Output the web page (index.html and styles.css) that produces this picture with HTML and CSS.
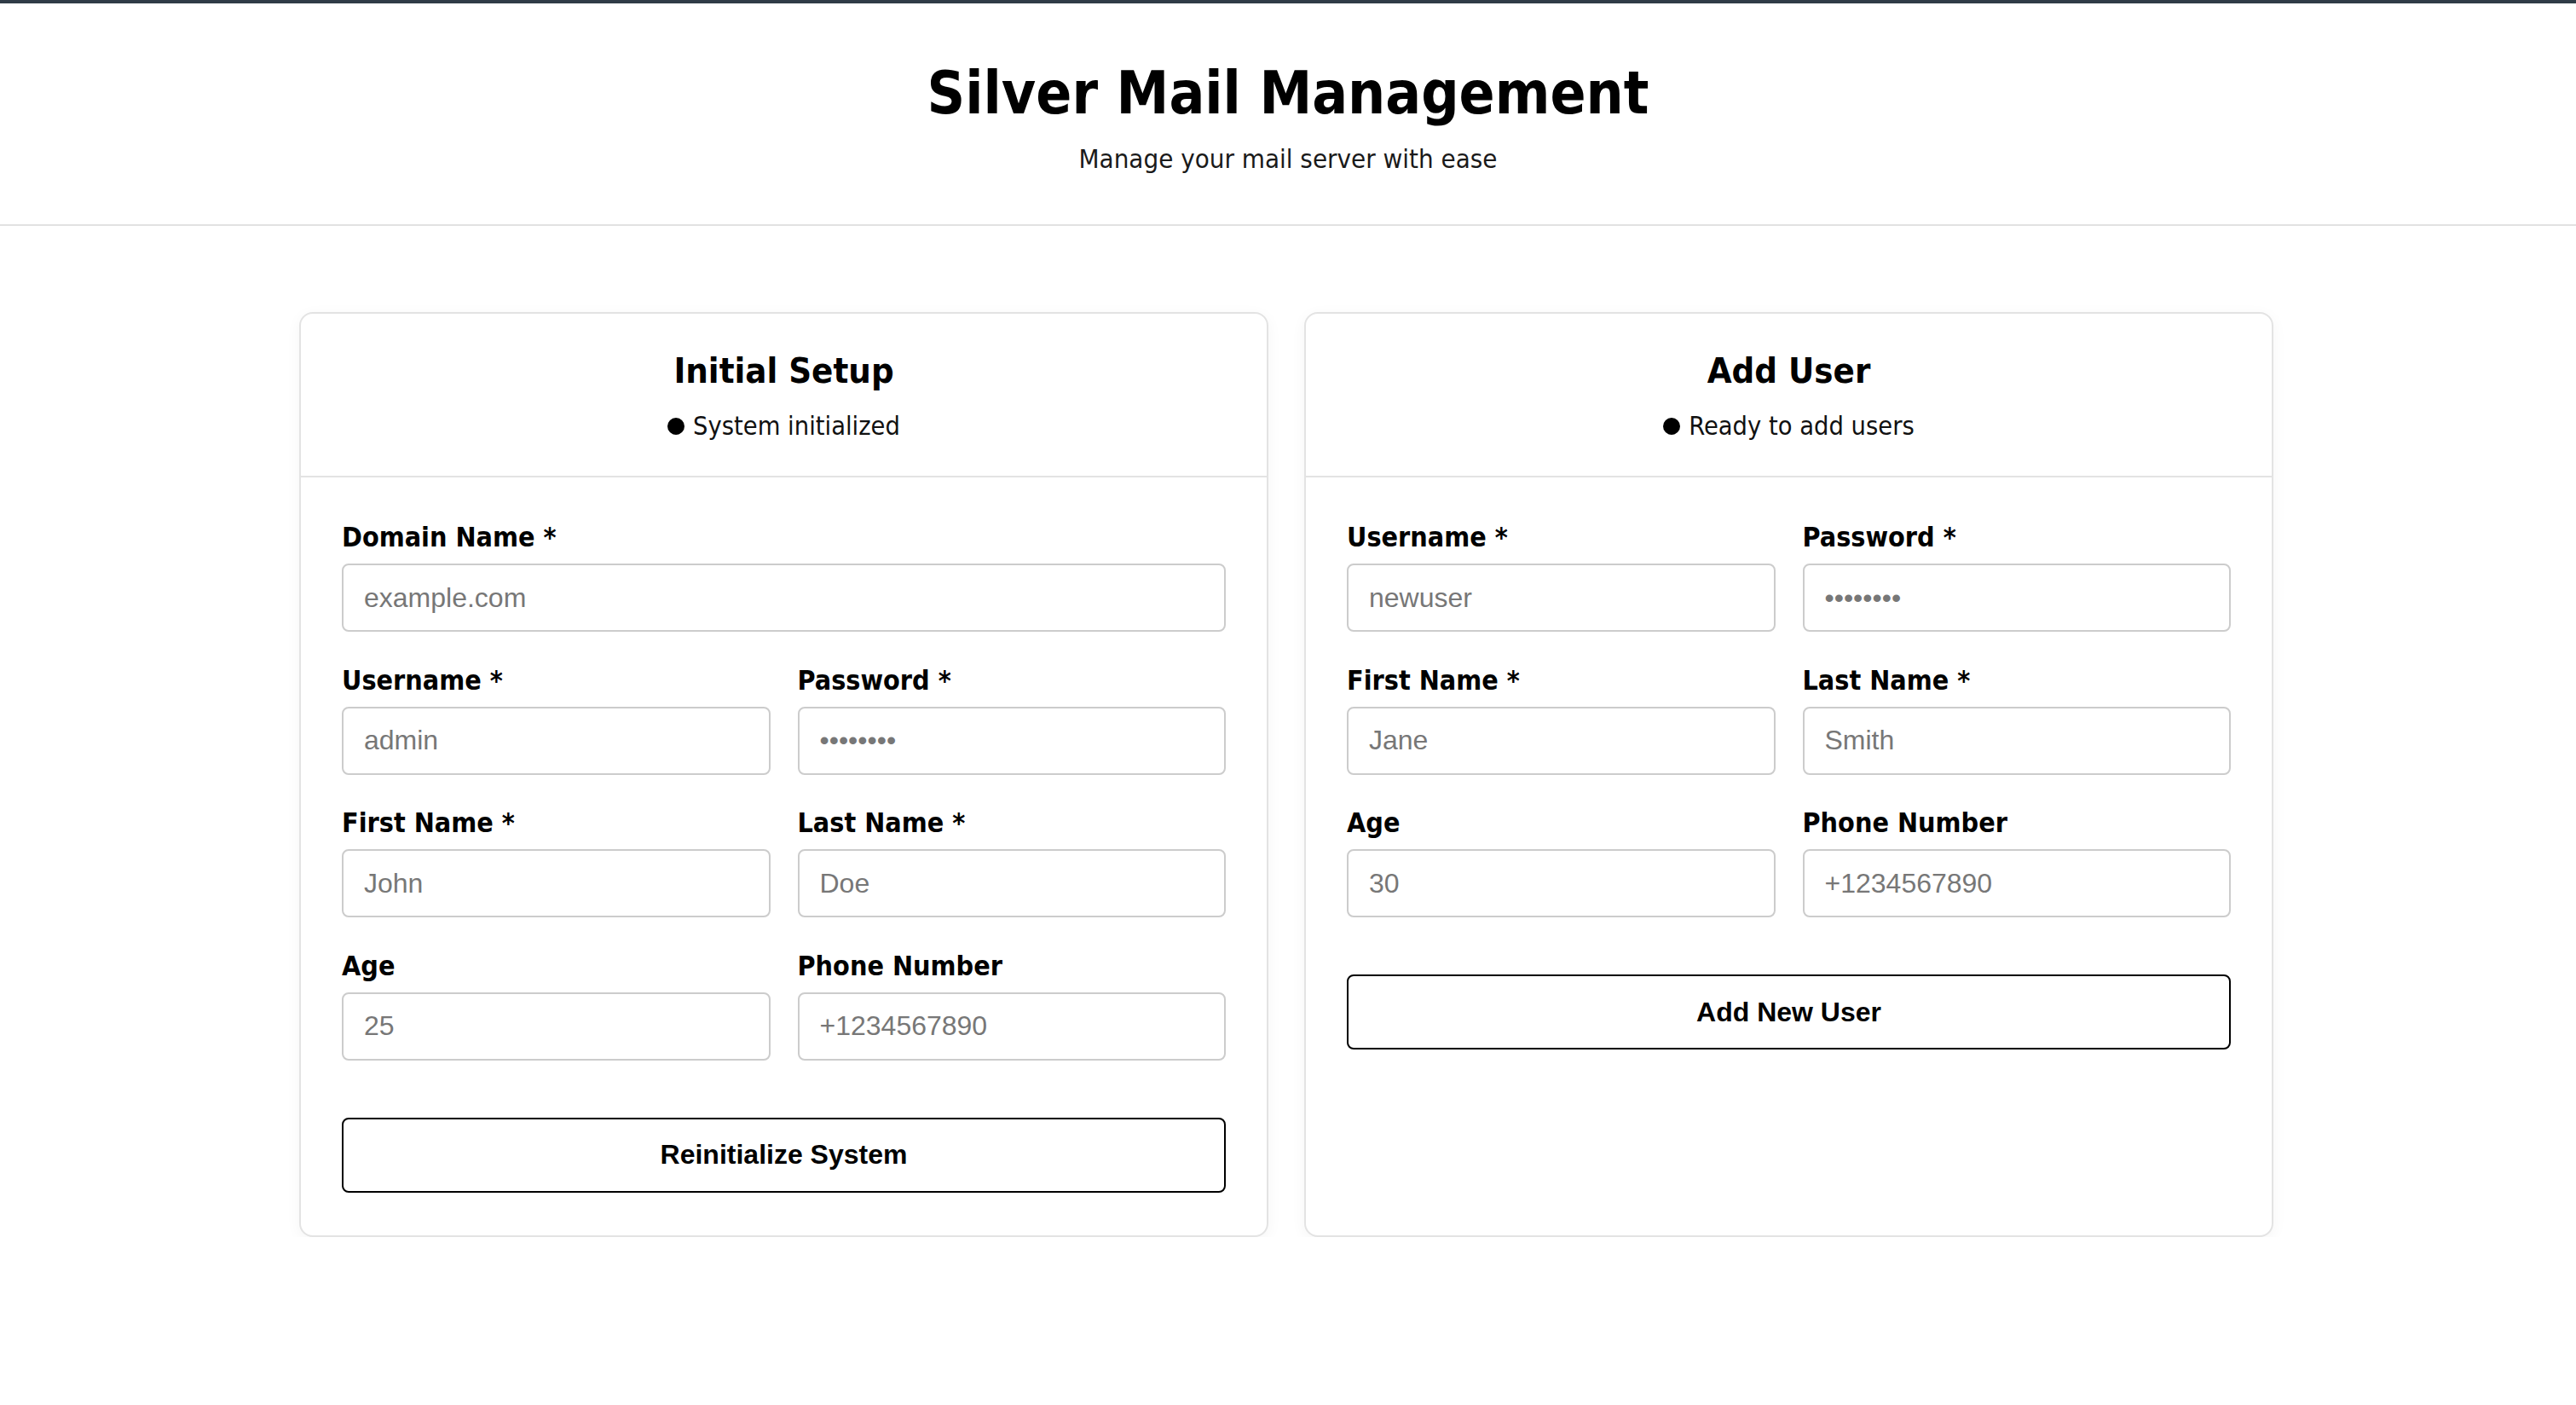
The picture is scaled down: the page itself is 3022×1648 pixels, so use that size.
FILE: index.html
```html
<!DOCTYPE html>
<html lang="en">
<head>
<meta charset="utf-8">
<title>Silver Mail Management</title>
<link rel="stylesheet" href="styles.css">
</head>
<body>
<header class="site-header">
  <h1 class="site-title">Silver Mail Management</h1>
  <p class="site-subtitle">Manage your mail server with ease</p>
</header>
<main class="panels">
  <section class="card">
    <div class="card-head">
      <h2 class="card-title">Initial Setup</h2>
      <p class="status"><span class="dot"></span>System initialized</p>
    </div>
    <form class="card-body">
      <div class="grid">
        <div class="field full">
          <label class="label">Domain Name *</label>
          <input class="input" type="text" placeholder="example.com">
        </div>
        <div class="field">
          <label class="label">Username *</label>
          <input class="input" type="text" placeholder="admin">
        </div>
        <div class="field">
          <label class="label">Password *</label>
          <input class="input" type="password" placeholder="••••••••">
        </div>
        <div class="field">
          <label class="label">First Name *</label>
          <input class="input" type="text" placeholder="John">
        </div>
        <div class="field">
          <label class="label">Last Name *</label>
          <input class="input" type="text" placeholder="Doe">
        </div>
        <div class="field">
          <label class="label">Age</label>
          <input class="input" type="text" placeholder="25">
        </div>
        <div class="field">
          <label class="label">Phone Number</label>
          <input class="input" type="text" placeholder="+1234567890">
        </div>
      </div>
      <button class="btn" type="button">Reinitialize System</button>
    </form>
  </section>
  <section class="card">
    <div class="card-head">
      <h2 class="card-title">Add User</h2>
      <p class="status"><span class="dot"></span>Ready to add users</p>
    </div>
    <form class="card-body">
      <div class="grid">
        <div class="field">
          <label class="label">Username *</label>
          <input class="input" type="text" placeholder="newuser">
        </div>
        <div class="field">
          <label class="label">Password *</label>
          <input class="input" type="password" placeholder="••••••••">
        </div>
        <div class="field">
          <label class="label">First Name *</label>
          <input class="input" type="text" placeholder="Jane">
        </div>
        <div class="field">
          <label class="label">Last Name *</label>
          <input class="input" type="text" placeholder="Smith">
        </div>
        <div class="field">
          <label class="label">Age</label>
          <input class="input" type="text" placeholder="30">
        </div>
        <div class="field">
          <label class="label">Phone Number</label>
          <input class="input" type="text" placeholder="+1234567890">
        </div>
      </div>
      <button class="btn" type="button">Add New User</button>
    </form>
  </section>
</main>
</body>
</html>
```

FILE: styles.css
```css
* { box-sizing: border-box; }

html, body { background: #ffffff; }

body {
  margin: 0;
  border-top: 4px solid #303c47;
  font-family: "DejaVu Sans Condensed", "DejaVu Sans", sans-serif;
  font-stretch: condensed;
  color: #000;
}

.site-header {
  text-align: center;
  padding: 65px 0 59px;
  border-bottom: 2px solid #e2e2e2;
}

.site-title {
  margin: 0;
  font-size: 69px;
  font-weight: bold;
  line-height: 80px;
  color: #000;
}

.site-subtitle {
  margin: 19px 0 0;
  font-size: 31px;
  line-height: 36px;
  color: #1a1a1a;
}

.panels {
  width: 2316px;
  margin: 101px 0 0 calc(50% - 1160px);
  display: grid;
  grid-template-columns: 1fr 1fr;
  column-gap: 42px;
  align-items: stretch;
}

.card {
  background: #fff;
  border: 2px solid #e3e3e3;
  border-radius: 16px;
  box-shadow: 0 4px 18px rgba(0, 0, 0, 0.045);
  display: flex;
  flex-direction: column;
}

.card-head {
  text-align: center;
  padding: 43px 48px 40px;
  border-bottom: 2px solid #e3e3e3;
}

.card-title {
  margin: 0;
  font-size: 41.5px;
  line-height: 48px;
  font-weight: bold;
}

.status {
  margin: 23px 0 0;
  font-size: 30.5px;
  line-height: 36px;
  color: #111;
  display: flex;
  justify-content: center;
  align-items: center;
}

.dot {
  display: inline-block;
  width: 20px;
  height: 20px;
  border-radius: 50%;
  background: #000;
  margin-right: 10px;
}

.card-body {
  padding: 52px 48px 50px;
  margin: 0;
}

.grid {
  display: grid;
  grid-template-columns: 1fr 1fr;
  column-gap: 32px;
  row-gap: 38.6px;
}

.field.full { grid-column: 1 / -1; }

.label {
  display: block;
  font-size: 32px;
  line-height: 36px;
  font-weight: bold;
  margin-bottom: 13px;
}

.input {
  display: block;
  width: 100%;
  height: 80px;
  padding: 0 24px;
  border: 2px solid #cccccc;
  border-radius: 8px;
  font-family: "Liberation Sans", Arial, sans-serif;
  font-size: 32px;
  color: #333;
  background: #fff;
  outline: none;
}

.input::placeholder { color: #777777; }

.btn {
  display: block;
  width: 100%;
  margin-top: 67px;
  height: 88px;
  padding: 0 24px;
  border: 2px solid #000;
  border-radius: 8px;
  background: #fff;
  color: #000;
  font-family: "Liberation Sans", Arial, sans-serif;
  font-size: 32px;
  font-weight: bold;
  cursor: pointer;
}
```
